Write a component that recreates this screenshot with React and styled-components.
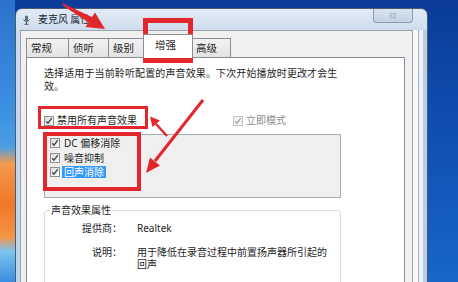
import React from "react";
import styled, { createGlobalStyle } from "styled-components";

const GlobalStyle = createGlobalStyle`
  html, body {
    margin: 0;
    padding: 0;
  }
  body {
    font-family: "Noto Sans", "Noto Sans CJK SC", sans-serif;
    color: #1e1e1e;
  }
`;

const tabs = [
    { label: "常规", width: 43 },
    { label: "侦听", width: 41 },
    { label: "级别", width: 38 },
    { label: "增强", width: 50, active: true },
    { label: "高级", width: 40 },
];

const effects = [
    { label: "DC 偏移消除" },
    { label: "噪音抑制" },
    { label: "回声消除", selected: true },
];

function CheckMark({ disabled }) {
    return (
        <Box $disabled={disabled}>
            <svg width="8" height="8" viewBox="0 0 8 8">
                <polyline
                    points="1.2,4.2 3,6.2 6.8,1.2"
                    fill="none"
                    stroke={disabled ? "#a8a8a8" : "#3a3f4a"}
                    strokeWidth="1.3"
                />
            </svg>
        </Box>
    );
}

function MicIcon() {
    return (
        <svg width="9" height="10" viewBox="0 0 9 10">
            <rect x="3" y="0.5" width="3" height="5.5" rx="1.5" fill="#5a6b80" />
            <path d="M1.5 4.5 Q4.5 8.5 7.5 4.5" fill="none" stroke="#3c4a5c" strokeWidth="0.9" />
            <line x1="4.5" y1="6.8" x2="4.5" y2="9" stroke="#3c4a5c" strokeWidth="0.9" />
            <line x1="2.5" y1="9.3" x2="6.5" y2="9.3" stroke="#3c4a5c" strokeWidth="0.9" />
        </svg>
    );
}

function Annotations() {
    const red = "#e3262b";
    return (
        <Overlay viewBox="0 0 458 282">
            <rect x="145.5" y="20.5" width="45" height="40" fill="none" stroke={red} strokeWidth="5" />
            <rect x="39.5" y="107.5" width="107" height="20" fill="none" stroke={red} strokeWidth="3" />
            <rect x="45" y="134" width="94" height="55" fill="none" stroke={red} strokeWidth="4" />

            {/* arrow to the tab */}
            <polygon points="62,3 63.5,6 91,24 94,18" fill={red} />
            <polygon points="105,29 85.5,27 95,12.5" fill={red} />

            {/* arrow to the effect list */}
            <line x1="203" y1="100" x2="155" y2="161" stroke={red} strokeWidth="3" />
            <polygon points="146,173 160,165.5 150,157.5" fill={red} />

            {/* arrow to the disable checkbox */}
            <line x1="167" y1="136" x2="156" y2="124" stroke={red} strokeWidth="2.5" />
            <polygon points="150,116.5 160,120.5 152.5,127" fill={red} />
        </Overlay>
    );
}

export default function App() {
    return (
        <>
            <GlobalStyle />
            <Desktop>
                <Window>
                    <TitleBar>
                        <MicIcon />
                        <Title>麦克风 属性</Title>
                        <CloseButton>✕</CloseButton>
                    </TitleBar>
                    <FrameRow>
                        <DialogBody>
                            <TabStrip>
                                {tabs.map((t) => (
                                    <Tab key={t.label} $width={t.width} $active={t.active}>
                                        {t.label}
                                    </Tab>
                                ))}
                            </TabStrip>
                            <Panel>
                                <Intro>
                                    选择适用于当前聆听配置的声音效果。下次开始播放时更改才会生效。
                                </Intro>
                                <OptionRow>
                                    <CheckItem>
                                        <CheckMark />
                                        禁用所有声音效果
                                    </CheckItem>
                                    <CheckItem $disabled>
                                        <CheckMark disabled />
                                        立即模式
                                    </CheckItem>
                                </OptionRow>
                                <EffectList>
                                    {effects.map((e) => (
                                        <EffectItem key={e.label}>
                                            <CheckMark />
                                            <EffectLabel $selected={e.selected}>{e.label}</EffectLabel>
                                        </EffectItem>
                                    ))}
                                </EffectList>
                                <GroupBox>
                                    <Legend>声音效果属性</Legend>
                                    <PropGrid>
                                        <PropLabel>提供商：</PropLabel>
                                        <PropValue>Realtek</PropValue>
                                        <PropLabel>说明：</PropLabel>
                                        <PropValue>用于降低在录音过程中前置扬声器所引起的回声</PropValue>
                                    </PropGrid>
                                </GroupBox>
                            </Panel>
                        </DialogBody>
                        <RightFrame />
                    </FrameRow>
                </Window>
                <Annotations />
            </Desktop>
        </>
    );
}

const Desktop = styled.div`
    position: relative;
    width: 458px;
    height: 282px;
    overflow: hidden;
    box-sizing: border-box;
    padding: 8px 0 0 15px;
    background:
        linear-gradient(
                180deg,
                #2a72cc 0%,
                #3d92e2 40%,
                #4a9ee4 52%,
                #f39a4e 58%,
                #f07828 72%,
                #f49444 84%,
                #7cc4ee 89%,
                #3a8ee0 100%
            )
            left top / 15px 100% no-repeat,
        linear-gradient(180deg, #0a3c98 0%, #0e4cae 40%, #1866c8 100%);
`;

const Window = styled.div`
    width: 413px;
    height: 300px;
    box-sizing: border-box;
    display: flex;
    flex-direction: column;
    border: 1px solid #4b5b72;
    border-radius: 7px 7px 0 0;
    background: linear-gradient(180deg, #e2ebf5 0%, #cddced 22px, #bed1e6 100%);
`;

const TitleBar = styled.div`
    height: 21px;
    display: flex;
    align-items: center;
    gap: 7px;
    padding-left: 6px;
`;

const Title = styled.span`
    font-family: "Noto Sans CJK SC", sans-serif;
    font-size: 10px;
    line-height: 12px;
    margin-top: -2px;
    color: #1b2838;
`;

const CloseButton = styled.div`
    align-self: flex-start;
    margin-left: auto;
    margin-right: 14px;
    width: 40px;
    height: 14px;
    box-sizing: border-box;
    border: 1px solid #8c9db2;
    border-top: none;
    border-radius: 0 0 4px 4px;
    background: linear-gradient(180deg, #d9e4ef, #c2d3e5);
    display: flex;
    align-items: center;
    justify-content: center;
    font-family: "DejaVu Sans", sans-serif;
    font-size: 9px;
    font-weight: bold;
    color: #f4f7fa;
    text-shadow: 0 0 1px #46566a, 0 0 1px #46566a;
`;

const FrameRow = styled.div`
    flex: 1;
    display: flex;
    padding-left: 4px;
`;

const DialogBody = styled.div`
    flex: 1;
    display: flex;
    flex-direction: column;
    background: #f0f0f0;
    border: 1px solid #97a3b1;
    border-bottom: none;
    padding: 3px 7px 0 5px;
`;

const RightFrame = styled.div`
    width: 14px;
    background: linear-gradient(
        90deg,
        #f6f8fa 0 5px,
        #a3adb8 5px 6px,
        #eef2f6 6px 10px,
        #b9cde3 10px
    );
`;

const TabStrip = styled.div`
    height: 23px;
    display: flex;
    align-items: flex-end;
`;

const Tab = styled.div`
    position: relative;
    z-index: ${(p) => (p.$active ? 1 : 0)};
    width: ${(p) => p.$width}px;
    height: ${(p) => (p.$active ? 24 : 19)}px;
    box-sizing: border-box;
    margin: 0 ${(p) => (p.$active ? -2 : -1)}px ${(p) => (p.$active ? -1 : 0)}px
        ${(p) => (p.$active ? -2 : 0)}px;
    padding: ${(p) => (p.$active ? "3px 0 0 11px" : "2px 0 0 4px")};
    border: 1px solid #898c95;
    border-bottom: none;
    background: ${(p) => (p.$active ? "#ffffff" : "linear-gradient(180deg, #f3f3f3, #e2e2e2)")};
    font-family: "Noto Sans CJK SC", sans-serif;
    font-size: 10.5px;
    line-height: 13px;
`;

const Panel = styled.div`
    flex: 1;
    background: #ffffff;
    border: 1px solid #898c95;
    padding: 9px 0 0 17px;
    font-family: "Noto Sans", "Noto Sans CJK SC", sans-serif;
    font-size: 10px;
`;

const Intro = styled.p`
    margin: 0;
    width: 297px;
    line-height: 13px;
    letter-spacing: 0.12px;
`;

const OptionRow = styled.div`
    margin-top: 21px;
    display: grid;
    grid-template-columns: 189px auto;
    line-height: 13px;
`;

const CheckItem = styled.label`
    display: flex;
    align-items: center;
    gap: 3px;
    color: ${(p) => (p.$disabled ? "#8d8d8d" : "#1e1e1e")};
`;

const Box = styled.span`
    width: 10px;
    height: 10px;
    box-sizing: border-box;
    display: inline-flex;
    align-items: center;
    justify-content: center;
    border: 1px solid ${(p) => (p.$disabled ? "#c4c4c4" : "#8e8f8f")};
    background: ${(p) => (p.$disabled ? "#f4f4f4" : "linear-gradient(135deg, #dcdcdc, #fdfdfd)")};
`;

const EffectList = styled.div`
    margin-top: 7px;
    width: 297px;
    height: 64px;
    box-sizing: border-box;
    border: 1px solid #abadb3;
    background: #efefef;
    padding: 1px 0 0 5px;
`;

const EffectItem = styled.div`
    display: flex;
    align-items: center;
    gap: 2px;
    height: 14.5px;
`;

const EffectLabel = styled.span`
    padding: 0 2px;
    line-height: 12px;
    background: ${(p) => (p.$selected ? "#3399ff" : "transparent")};
    color: ${(p) => (p.$selected ? "#ffffff" : "#1e1e1e")};
`;

const GroupBox = styled.fieldset`
    margin: 6px 0 0 0;
    width: 297px;
    height: 90px;
    box-sizing: border-box;
    padding: 0;
    border: 1px solid #d5dfe5;
    border-radius: 3px;
`;

const Legend = styled.legend`
    margin-left: 5px;
    padding: 0 1px;
    line-height: 13px;
`;

const PropGrid = styled.div`
    display: grid;
    grid-template-columns: 77px 196px;
    column-gap: 15px;
    row-gap: 12px;
    padding-top: 5px;
    line-height: 12px;
`;

const PropLabel = styled.span`
    text-align: right;
`;

const PropValue = styled.span``;

const Overlay = styled.svg`
    position: absolute;
    left: 0;
    top: 0;
    width: 458px;
    height: 282px;
    pointer-events: none;
`;
